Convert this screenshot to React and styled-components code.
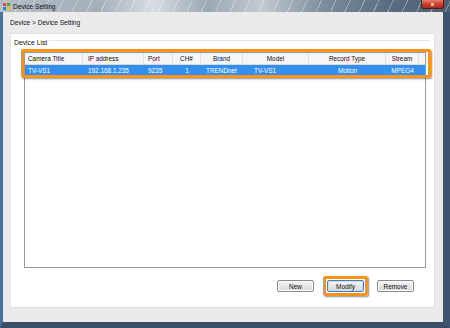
import React from 'react'
import styled, { createGlobalStyle } from 'styled-components'

const GlobalStyle = createGlobalStyle`
  html, body {
    margin: 0;
    padding: 0;
  }
  body {
    background: #3f5a78;
    font-family: "Liberation Sans", Arial, sans-serif;
  }
`

const columns = [
  { title: 'Camera Title', width: 58, head: 'left', cell: 'left', pad: 3 },
  { title: 'IP address', width: 61, head: 'left', cell: 'left', pad: 5 },
  { title: 'Port', width: 29, head: 'left', cell: 'left', pad: 4 },
  { title: 'CH#', width: 28, head: 'center', cell: 'center', pad: 0 },
  { title: 'Brand', width: 42, head: 'center', cell: 'left', pad: 5 },
  { title: 'Model', width: 66, head: 'center', cell: 'left', pad: 11 },
  { title: 'Record Type', width: 77, head: 'center', cell: 'center', pad: 0 },
  { title: 'Stream', width: 33, head: 'center', cell: 'center', pad: 0 },
]

const devices = [
  ['TV-VS1', '192.168.1.235', '9235', '1', 'TRENDnet', 'TV-VS1', 'Motion', 'MPEG4'],
]

const Screen = styled.div`
  width: 450px;
  height: 328px;
  display: flex;
  flex-direction: column;
  overflow: hidden;
`

const TitleBar = styled.div`
  height: 12px;
  flex: none;
  display: flex;
  align-items: center;
  padding-left: 3px;
  gap: 3px;
  background:
    repeating-linear-gradient(115deg, rgba(255, 255, 255, 0) 0 5px, rgba(255, 255, 255, 0.35) 5px 6px, rgba(255, 255, 255, 0) 6px 13px),
    linear-gradient(90deg, #b3bcc5 0%, #a4afba 22%, #d9dee3 34%, #9aa7b4 46%, #c3cad1 58%, #7c8c9d 72%, #5a6d81 86%, #4b5f74 100%);
  position: relative;
`

const TitleText = styled.span`
  font-size: 6.6px;
  color: #111;
`

const CloseButton = styled.div`
  position: absolute;
  top: 0;
  right: 6px;
  width: 21px;
  height: 8px;
  border: 1px solid #5a1c14;
  border-top: none;
  border-radius: 0 0 3px 3px;
  background: linear-gradient(#e8806c, #c8402c 50%, #a82a18);
  color: #fff;
  font-size: 6px;
  font-weight: bold;
  display: flex;
  align-items: center;
  justify-content: center;
  line-height: 1;
`

const Client = styled.div`
  flex: 1;
  display: flex;
  flex-direction: column;
  background: #ebebeb;
  border-left: 3px solid #4d6f96;
  border-right: 7px solid #3e566f;
  border-bottom: 6px solid #3b4f66;
  padding: 0 8px 14px 7px;
`

const Breadcrumb = styled.div`
  height: 21px;
  flex: none;
  display: flex;
  align-items: center;
  font-size: 6.6px;
  color: #111;
`

const Panel = styled.div`
  flex: 1;
  background: #fff;
  border: 1px solid #e2e2e2;
  display: flex;
  flex-direction: column;
  padding: 2px 0 0 3px;
`

const GroupHeader = styled.div`
  display: flex;
  align-items: center;
  height: 12px;
  gap: 2px;
  padding-right: 4px;
`

const GroupLabel = styled.span`
  font-size: 6.8px;
  color: #111;
`

const GroupLine = styled.div`
  flex: 1;
  height: 1px;
  background: #e6e6e6;
  margin-top: -3px;
`

const ListWrap = styled.div`
  margin: 4px 8px 0 10px;
  height: 216px;
  position: relative;
`

const ListBox = styled.div`
  height: 100%;
  box-sizing: border-box;
  border: 1px solid #9a9a9a;
  background: #fff;
`

const Row = styled.div`
  display: flex;
  height: ${p => (p.$head ? 12 : 10)}px;
  align-items: center;
  background: ${p => (p.$selected ? '#3490f0' : p.$head ? '#f6f6f6' : '#fff')};
  color: ${p => (p.$selected ? '#fff' : '#111')};
  border-bottom: ${p => (p.$head ? '1px solid #d8d8d8' : 'none')};
  box-sizing: border-box;
`

const Cell = styled.div`
  width: ${p => p.$width}px;
  flex: none;
  box-sizing: border-box;
  padding-left: ${p => p.$pad}px;
  text-align: ${p => p.$align};
  font-size: 6.4px;
  white-space: nowrap;
  overflow: hidden;
  height: 100%;
  display: flex;
  align-items: center;
  justify-content: ${p => (p.$align === 'center' ? 'center' : 'flex-start')};
  border-right: ${p => (p.$head ? '1px solid #e2e2e2' : 'none')};
`

const Highlight = styled.div`
  position: absolute;
  left: -3px;
  top: -3px;
  width: 410px;
  height: 29px;
  box-sizing: border-box;
  border: 3px solid #f7941d;
  border-radius: 2px;
  box-shadow: 1px 1px 2px rgba(0, 0, 0, 0.45);
  pointer-events: none;
`

const ButtonRow = styled.div`
  display: flex;
  justify-content: flex-end;
  align-items: center;
  gap: 9px;
  margin-top: 8px;
  padding-right: 20px;
`

const Button = styled.button`
  width: 37px;
  height: 12px;
  padding: 0;
  font-family: inherit;
  font-size: 6.4px;
  color: #111;
  border: 1px solid ${p => (p.$focused ? '#4a7fae' : '#8a8a8a')};
  border-radius: 2px;
  background: linear-gradient(#f6f6f6, #e6e6e6 50%, #d9d9d9);
  box-shadow: inset 0 0 0 1px ${p => (p.$focused ? '#bfe1f5' : '#fcfcfc')};
`

const FocusMark = styled.div`
  padding: 3px;
  border: 1px solid #f7941d;
  outline: 2px solid #f7941d;
  outline-offset: -3px;
  border-radius: 2px;
  box-shadow: 1px 1px 2px rgba(0, 0, 0, 0.45);
  display: flex;
`

const AppIcon = () => (
  <svg width="7" height="7" viewBox="0 0 7 7">
    <rect x="0" y="0" width="3" height="3" fill="#e84c2b" />
    <rect x="4" y="0" width="3" height="3" fill="#4fa83d" />
    <rect x="0" y="4" width="3" height="3" fill="#2f7ad8" />
    <rect x="4" y="4" width="3" height="3" fill="#f4c21c" />
  </svg>
)

export default function App() {
  return (
    <Screen>
      <GlobalStyle />
      <TitleBar>
        <AppIcon />
        <TitleText>Device Setting</TitleText>
        <CloseButton>x</CloseButton>
      </TitleBar>
      <Client>
        <Breadcrumb>Device &gt; Device Setting</Breadcrumb>
        <Panel>
          <GroupHeader>
            <GroupLabel>Device List</GroupLabel>
            <GroupLine />
          </GroupHeader>
          <ListWrap>
            <ListBox>
              <Row $head>
                {columns.map(c => (
                  <Cell key={c.title} $head $width={c.width} $align={c.head} $pad={c.head === 'left' ? c.pad : 0}>
                    {c.title}
                  </Cell>
                ))}
              </Row>
              {devices.map((d, i) => (
                <Row key={i} $selected={i === 0}>
                  {d.map((v, j) => (
                    <Cell key={j} $width={columns[j].width} $align={columns[j].cell} $pad={columns[j].pad}>
                      {v}
                    </Cell>
                  ))}
                </Row>
              ))}
            </ListBox>
            <Highlight />
          </ListWrap>
          <ButtonRow>
            <Button>New</Button>
            <FocusMark>
              <Button $focused>Modify</Button>
            </FocusMark>
            <Button>Remove</Button>
          </ButtonRow>
        </Panel>
      </Client>
    </Screen>
  )
}
